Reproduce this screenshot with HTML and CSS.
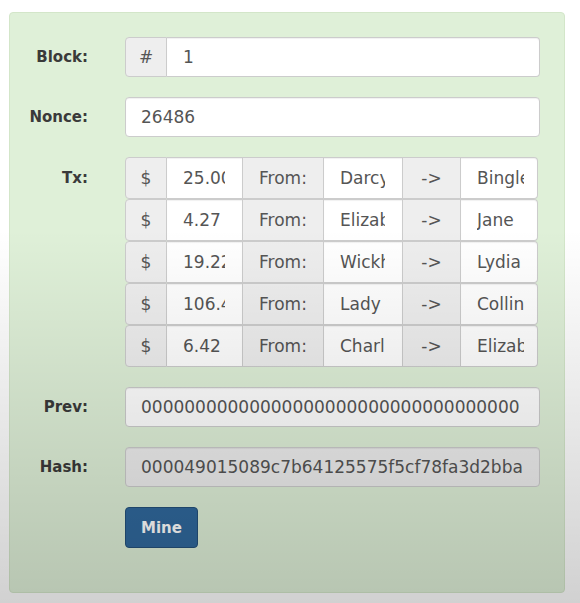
FILE: index.html
```html
<!DOCTYPE html>
<html>
<head>
<meta charset="utf-8">
<link rel="stylesheet" href="styles.css">
</head>
<body>
<div class="card">
  <div class="row">
    <label class="lbl">Block:</label>
    <div class="group">
      <span class="addon addon-first">#</span>
      <input class="field field-last" value="1">
    </div>
  </div>
  <div class="row">
    <label class="lbl">Nonce:</label>
    <div class="group">
      <input class="field field-solo" value="26486">
    </div>
  </div>
  <div class="row row-tx">
    <label class="lbl">Tx:</label>
    <div class="txlist">
      <div class="txrow">
        <span class="addon addon-first c-sym">$</span>
        <input class="field c-amt" value="25.00">
        <span class="addon c-from">From:</span>
        <input class="field c-name" value="Darcy">
        <span class="addon c-arrow">-&gt;</span>
        <input class="field field-last c-to" value="Bingley">
      </div>
      <div class="txrow">
        <span class="addon addon-first c-sym">$</span>
        <input class="field c-amt" value="4.27">
        <span class="addon c-from">From:</span>
        <input class="field c-name" value="Elizabeth">
        <span class="addon c-arrow">-&gt;</span>
        <input class="field field-last c-to" value="Jane">
      </div>
      <div class="txrow">
        <span class="addon addon-first c-sym">$</span>
        <input class="field c-amt" value="19.22">
        <span class="addon c-from">From:</span>
        <input class="field c-name" value="Wickham">
        <span class="addon c-arrow">-&gt;</span>
        <input class="field field-last c-to" value="Lydia">
      </div>
      <div class="txrow">
        <span class="addon addon-first c-sym">$</span>
        <input class="field c-amt" value="106.44">
        <span class="addon c-from">From:</span>
        <input class="field c-name" value="Lady Catherine">
        <span class="addon c-arrow">-&gt;</span>
        <input class="field field-last c-to" value="Collins">
      </div>
      <div class="txrow">
        <span class="addon addon-first c-sym">$</span>
        <input class="field c-amt" value="6.42">
        <span class="addon c-from">From:</span>
        <input class="field c-name" value="Charlotte">
        <span class="addon c-arrow">-&gt;</span>
        <input class="field field-last c-to" value="Elizabeth">
      </div>
    </div>
  </div>
  <div class="row">
    <label class="lbl">Prev:</label>
    <div class="group">
      <input class="field field-solo field-prev" value="0000000000000000000000000000000000000000000000000000000000000000">
    </div>
  </div>
  <div class="row">
    <label class="lbl">Hash:</label>
    <div class="group">
      <input class="field field-solo field-ro" readonly value="000049015089c7b64125575f5cf78fa3d2bba1f1d2a0e6f0b4a8c71a2bcd9e4f">
    </div>
  </div>
  <div class="row row-btn">
    <span class="lbl"></span>
    <button class="btn">Mine</button>
  </div>
</div>
<div class="vignette"></div>
</body>
</html>
```

FILE: styles.css
```css
html, body {
  margin: 0;
  padding: 0;
}
body {
  background: #ffffff;
  width: 580px;
  height: 603px;
  position: relative;
  overflow: hidden;
  font-family: "DejaVu Sans", "Liberation Sans", sans-serif;
}
.card {
  margin: 12px 15px 0 9px;
  box-sizing: border-box;
  height: 581px;
  background: #dff0d8;
  border: 1px solid #d3e6c9;
  border-radius: 4px;
  padding: 24px 24px 0 0;
  display: flex;
  flex-direction: column;
  gap: 20px;
}
.row {
  display: flex;
  align-items: flex-start;
}
.lbl {
  width: 78px;
  flex: none;
  margin-right: 37px;
  text-align: right;
  font-weight: bold;
  font-size: 15px;
  color: #3a3a3a;
  line-height: 40px;
}
.row-tx .lbl {
  line-height: 42px;
}
.group {
  flex: 1;
  display: flex;
  height: 40px;
}
.addon {
  box-sizing: border-box;
  background: #eeeeee;
  border: 1px solid #cccccc;
  border-left: none;
  color: #555555;
  font-size: 17px;
  display: flex;
  align-items: center;
  justify-content: center;
  flex: none;
}
.addon-first {
  border-left: 1px solid #cccccc;
  border-radius: 4px 0 0 4px;
  width: 42px;
}
.field {
  box-sizing: border-box;
  min-width: 0;
  height: 100%;
  margin: 0;
  border: 1px solid #cccccc;
  border-left: none;
  background: #ffffff;
  color: #555555;
  font-family: "DejaVu Sans", "Liberation Sans", sans-serif;
  font-size: 17px;
  padding: 0 17px 0 16px;
  outline: none;
  box-shadow: inset 0 1px 1px rgba(0, 0, 0, 0.06);
}
.group .field {
  flex: 1;
}
.field-last {
  border-radius: 0 4px 4px 0;
}
.c-to {
  padding: 0 13px 0 16px;
}
.field-solo {
  border-left: 1px solid #cccccc;
  border-radius: 4px;
  padding: 0 16px 0 15px;
}
.field-prev {
  padding-right: 19px;
}
.field-ro {
  background: #eeeeee;
}
.txlist {
  display: flex;
  flex-direction: column;
}
.txrow {
  display: flex;
  height: 42px;
}
.c-sym { width: 42px; }
.c-amt { width: 76px; flex: none; }
.c-from { width: 81px; }
.c-name { width: 79px; flex: none; }
.c-arrow { width: 58px; }
.c-to { width: 77px; flex: none; }
.btn {
  box-sizing: border-box;
  width: 73px;
  height: 41px;
  background: #30689c;
  border: 1px solid #24507a;
  border-radius: 4px;
  color: #ffffff;
  font-family: "DejaVu Sans", "Liberation Sans", sans-serif;
  font-weight: bold;
  font-size: 15px;
  padding: 0;
}
.vignette {
  position: absolute;
  left: 0;
  top: 0;
  width: 580px;
  height: 603px;
  pointer-events: none;
  background: linear-gradient(to bottom, rgba(0, 0, 0, 0) 38%, rgba(0, 0, 0, 0.18) 100%);
}
```
